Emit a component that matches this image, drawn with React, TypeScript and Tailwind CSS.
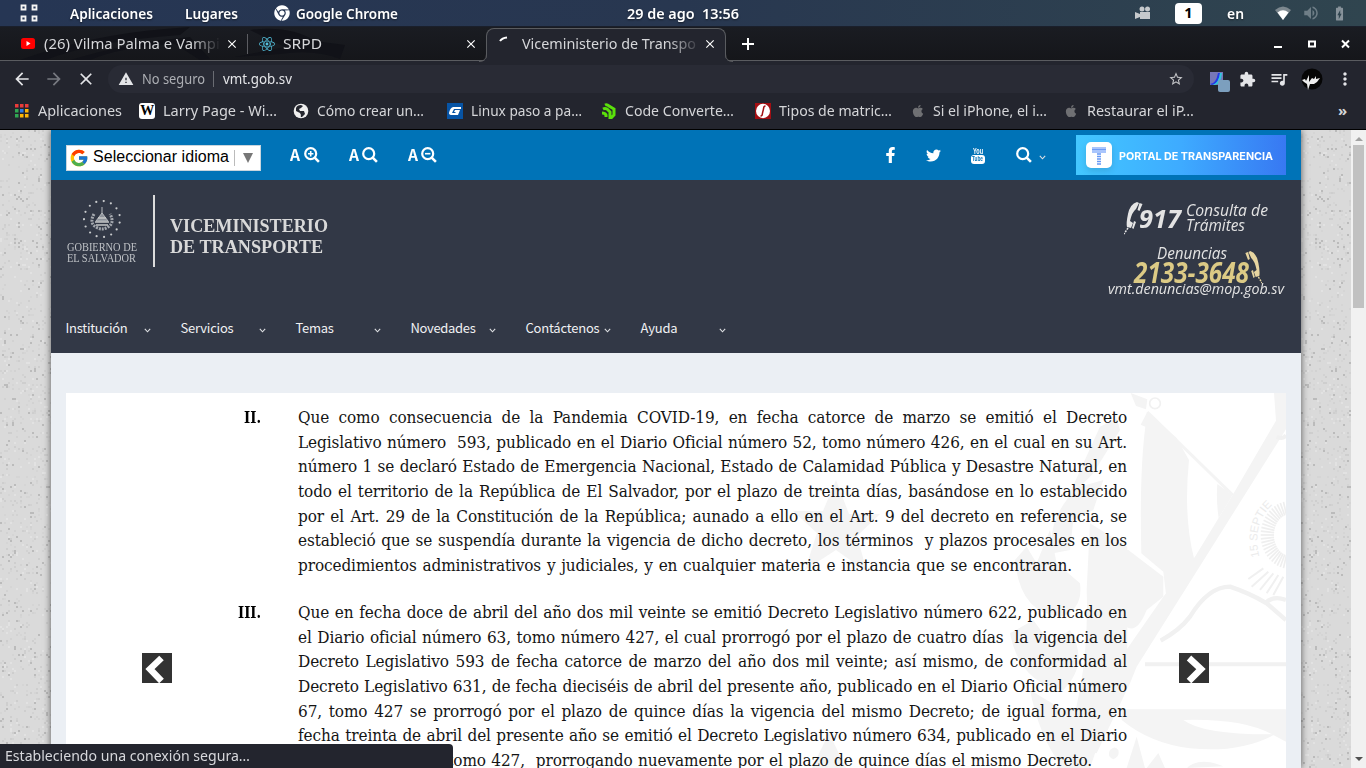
import React, { useLayoutEffect, useRef } from "react";
import { FaApple, FaChrome, FaFacebookF, FaReact, FaTwitter } from "react-icons/fa";
import { FcGoogle } from "react-icons/fc";
import { MdArrowBack, MdArrowForward, MdBatteryChargingFull, MdClose, MdExtension, MdMoreVert, MdQueueMusic, MdStarBorder, MdVolumeUp, MdWarning } from "react-icons/md";

// A single line of text fitted to a given width, by tracking or by narrowing its glyphs.
function T({ w, squeeze = false, className = "", children }: { w: number; squeeze?: boolean; className?: string; children: string }) {
  const ref = useRef<HTMLSpanElement>(null);
  useLayoutEffect(() => {
    const el = ref.current!;
    el.style.letterSpacing = "0px";
    el.style.transform = "none";
    const natural = el.getBoundingClientRect().width;
    if (squeeze) el.style.transform = `scaleX(${w / natural})`;
    else el.style.letterSpacing = `${(w - natural) / children.length}px`;
  }, [w, squeeze, children]);
  return (
    <span className={`block shrink-0 ${className}`} style={{ width: w }}>
      <span ref={ref} className="inline-block origin-left whitespace-pre">{children}</span>
    </span>
  );
}

function SystemBar() {
  return (
    <header className="flex h-[27px] shrink-0 items-center border-b border-[#1a1f2b] bg-gradient-to-r from-[#263654] via-[#283750] to-[#30454f] pl-5 text-[14.5px] font-semibold text-white [text-shadow:0_1px_2px_#0008]">
      <svg width="18" height="18" viewBox="0 0 18 18" fill="none" stroke="#f4f4f4" strokeWidth="1.8">
        <path d="M1.5 1.5h4v4h-4zM12.5 1.5h4v4h-4zM1.5 12.5h4v4h-4zM12.5 12.5h4v4h-4z" />
      </svg>
      <T w={83} squeeze className="ml-8 pt-px">Aplicaciones</T>
      <T w={53} squeeze className="ml-8 pt-px">Lugares</T>
      <FaChrome className="ml-9 size-4 shrink-0" />
      <T w={102} squeeze className="ml-1.5 pt-px">Google Chrome</T>
      <T w={112} squeeze className="ml-[229px] pt-px">29 de ago  13:56</T>
      <svg className="ml-[396px] shrink-0" width="16" height="14" viewBox="0 0 16 14" fill="#c6c9cc">
        <circle cx="7" cy="3" r="2.5" /><circle cx="12.5" cy="3" r="2.5" />
        <path d="M5 6h10v7H5V11L0 13V6l5 2z" />
      </svg>
      <div className="ml-6 flex h-[21px] w-[27px] shrink-0 items-center justify-center rounded-sm bg-white font-bold text-black [text-shadow:none]">1</div>
      <T w={17} squeeze className="ml-[25px] pt-px">en</T>
      <svg className="ml-[31px] shrink-0" width="16" height="14" viewBox="0 0 16 14">
        <path d="M8 14 0 4Q8-3 16 4z" fill="#7c878e" /><path d="M8 14 2.5 6.5Q8 2 13.5 6.5z" fill="#fff" />
      </svg>
      <MdVolumeUp className="ml-[11px] size-[18px] text-[#6f7e87]" />
      <MdBatteryChargingFull className="ml-[11px] size-[17px] text-[#87929a]" />
    </header>
  );
}

function TabStrip() {
  return (
    <div className="relative flex h-[34px] shrink-0 items-center border-b border-[#5a5c60] bg-gradient-to-b from-[#1a1c22] to-[#15161a] pl-[21px] text-[15px] text-[#d6d7da]">
      <svg className="absolute left-0 top-0" width="370" height="33" fill="#111218">
        <path d="M20 33Q90 8 165 2L190 0 180 8Q95 14 45 33zM70 33Q130 15 190 10L210 32 200 33 175 17Q120 20 90 33zM250 3Q290-2 315 14L345 18 340 32Q315 22 280 27L235 30 285 20z" />
      </svg>
      <svg className="relative shrink-0" width="14" height="11" viewBox="0 0 14 11"><rect width="14" height="11" rx="2.5" fill="#f00" /><path d="m5.5 3 4 2.5-4 2.5z" fill="#fff" /></svg>
      <div className="relative ml-[9px] w-[184px] [mask-image:linear-gradient(to_right,black_80%,transparent_96%)]"><T w={182} squeeze>(26) Vilma Palma e Vampir</T></div>
      <MdClose className="relative -ml-[3px] size-[14px] text-white" />
      <i className="relative ml-2 h-5 w-px bg-[#5c5d62]" />
      <FaReact className="relative ml-[11px] size-4 text-[#53c1de]" />
      <T w={39} squeeze className="relative ml-2">SRPD</T>
      <MdClose className="ml-[142px] size-[14px] shrink-0 text-white" />
      <div className="relative ml-2 flex h-[34px] w-[240px] shrink-0 translate-y-px items-center rounded-t-lg border-x border-t border-[#5a5c60] bg-[#23252e] pb-[3px] pl-3">
        <svg className="absolute -left-[8px] bottom-0" width="8" height="8"><path d="M0 8Q8 8 8 0V8z" fill="#23252e" /><path d="M0 7.5Q7.5 7.5 7.5 0" fill="none" stroke="#5a5c60" /></svg>
        <svg className="absolute -right-[8px] bottom-0" width="8" height="8"><path d="M8 8Q0 8 0 0V8z" fill="#23252e" /><path d="M8 7.5Q.5 7.5 .5 0" fill="none" stroke="#5a5c60" /></svg>
        <svg width="16" height="16" fill="none" stroke="#fff" strokeWidth="2"><path d="M1 5Q3 2 8 1.5" /></svg>
        <T w={174} squeeze className="ml-[7px] [mask-image:linear-gradient(to_right,black_84%,transparent_103%)]">Viceministerio de Transpo</T>
        <MdClose className="ml-[7px] size-[14px] shrink-0 text-white" />
      </div>
      <svg className="ml-4" width="12" height="12" stroke="#fff" strokeWidth="2"><path d="M6 0v12M0 6h12" /></svg>
      <svg className="ml-[519px]" width="80" height="12" fill="none" stroke="#fff"><path d="M1 9h8" strokeWidth="2" /><path d="M36 3.5h6v5h-6z" strokeWidth="2" /><path d="m69 2.5 7 7m0-7-7 7" strokeWidth="2" /></svg>
    </div>
  );
}

function Toolbar() {
  return (
    <div className="flex h-9 shrink-0 items-center bg-[#23252e] pl-3 text-[13.5px] text-[#e4e5e8]">
      <MdArrowBack className="size-5" />
      <MdArrowForward className="ml-3 size-5 text-[#777980]" />
      <MdClose className="ml-3 size-5" />
      <div className="ml-[12px] flex h-7 w-[1086px] items-center rounded-full bg-[#292b35] pl-[10px]">
        <MdWarning className="size-4 shrink-0" />
        <T w={63} squeeze className="ml-[8px] text-[#adafb4]">No seguro</T>
        <i className="ml-[8px] h-4 w-px bg-[#6a6c73]" />
        <T w={69} squeeze className="ml-[9px]">vmt.gob.sv</T>
        <MdStarBorder className="ml-[876px] size-4 shrink-0 text-[#c4c5c8]" />
      </div>
      <svg className="ml-[15px] mt-1 shrink-0" width="21" height="22" viewBox="0 0 21 22">
        <path d="M1 2h13v13H1z" fill="#7777b8" /><path d="M1 14Q7 14 9 3h2Q10 14 3 15z" fill="#243be8" /><path d="M4 15Q10 12 11 3h2Q12 14 6 15z" fill="#30c7dc" /><rect x="9" y="10" width="12" height="12" rx="2" fill="#7c9fbe" />
      </svg>
      <MdExtension className="ml-[9px] size-[17px] shrink-0" />
      <MdQueueMusic className="ml-[13px] size-5 shrink-0" />
      <svg className="ml-[12px] shrink-0" width="22" height="22" viewBox="0 0 22 22"><circle cx="11" cy="11" r="10.5" fill="#060606" /><path d="m1 12 3-1 1 2 3-6v7l3-4 2 1 2-3v3l4-1-3 4-3 2h-4l-2 6-1-6-3-2z" fill="#eee" /></svg>
      <MdMoreVert className="ml-3 size-5 shrink-0" />
    </div>
  );
}

function Bookmarks() {
  return (
    <nav className="flex h-8 shrink-0 items-center overflow-hidden bg-[#23252e] pb-[5px] pl-[15px] text-[15px] text-[#d5d6d9]">
      <svg width="14" height="14" className="mt-px shrink-0"><path d="M0 0h3.5v3.5H0zM5 0h3.5v3.5H5zM10 0h3.5v3.5H10z" fill="#ea3c3a" /><path d="M0 5h3.5v3.5H0zM0 10h3.5v3.5H0z" fill="#30a853" /><path d="M5 5h3.5v3.5H5z" fill="#2b7de9" /><path d="M10 5h3.5v3.5H10zM5 10h3.5v3.5H5zM10 10h3.5v3.5H10z" fill="#fbb606" /></svg>
      <T w={84} squeeze className="-mt-px ml-[9px]">Aplicaciones</T>
      <span className="ml-[17px] flex size-4 shrink-0 items-center justify-center rounded-[3px] bg-white font-['Liberation_Serif',serif] text-[14px] font-bold tracking-tighter text-black">W</span>
      <T w={114} squeeze className="-mt-px ml-2">Larry Page - Wi…</T>
      <svg className="ml-4 shrink-0" width="16" height="16" viewBox="0 0 16 16"><circle cx="8" cy="8" r="7.3" fill="#efefef" /><path d="M3 5q1-3 5-3l2 1-2 2-2 1 1 2h4l1 3-3 3q-2 0-1-2l-1-2-4-2z" fill="#25272f" /></svg>
      <T w={107} squeeze className="-mt-px ml-2">Cómo crear un…</T>
      <svg className="ml-[23px] shrink-0" width="16" height="16"><path d="M0 0h16v16H0z" fill="#0754a5" /><path d="M14 4H6Q3 5 2 10q0 2 3 2h6l2-5H8L7 9h2l-1 1H5l2-4h7z" fill="#fff" /></svg>
      <T w={111} squeeze className="-mt-px ml-2">Linux paso a pa…</T>
      <svg className="ml-[19px] shrink-0" width="16" height="16" fill="none" stroke="#5be10b" strokeWidth="3"><path d="M4 2q2-1 4 1l5 3v6l-3 3M2 6q2-1 4 0l3 3v7M1 10q3 0 4 2v2" /></svg>
      <T w={109} squeeze className="-mt-px ml-2">Code Converte…</T>
      <svg className="ml-[21px] shrink-0" width="16" height="16"><path d="M0 0h16v16H0z" fill="#a20f13" /><ellipse cx="8" cy="8" rx="7" ry="7.2" fill="#fff" /><path d="M10.5 3Q8.5 3 8.5 6L7.5 10q0 3-2 3" fill="none" stroke="#a20f13" strokeWidth="1.5" /></svg>
      <T w={113} squeeze className="-mt-px ml-2">Tipos de matric…</T>
      <FaApple className="ml-[19px] size-[14px] shrink-0 text-[#6f7073]" />
      <T w={114} squeeze className="-mt-px ml-2">Si el iPhone, el i…</T>
      <FaApple className="ml-[17px] size-[14px] shrink-0 text-[#6f7073]" />
      <T w={107} squeeze className="-mt-px ml-[9px]">Restaurar el iP…</T>
      <span className="-mt-px ml-[144px] font-bold">»</span>
    </nav>
  );
}

function Magnifier({ sign = "" }: { sign?: string }) {
  return (
    <svg className="shrink-0" width="16" height="16" viewBox="0 0 16 16" fill="none" stroke="#fff" strokeWidth="2.2">
      <circle cx="6.7" cy="6.7" r="5.5" /><path d="m10.7 10.7 4.2 4.2" strokeWidth="2.6" />
      {sign && <path d={sign} strokeWidth="1.6" />}
    </svg>
  );
}

const Chevron = ({ className = "" }: { className?: string }) => (
  <svg className={`shrink-0 ${className}`} width="7" height="5" fill="none" stroke="#dfe1e4" strokeWidth="1.1"><path d="m.8.8 2.7 3 2.7-3" /></svg>
);

function BlueBar() {
  return (
    <div className="flex h-[50px] shrink-0 items-center bg-[#0073b7] pl-[15px] text-white">
      <div className="mt-1.5 flex h-[26px] w-[195px] shrink-0 items-center border border-[#c8d5de] bg-white pl-[2px] font-['Liberation_Sans',sans-serif] text-[16px] text-black">
        <FcGoogle className="size-5" />
        <T w={136} className="ml-[4px] -mt-0.5">Seleccionar idioma</T>
        <i className="ml-[5px] h-4 w-px bg-[#bbb]" />
        <svg className="ml-2" width="10" height="10"><path d="M0 0h10L5 10z" fill="#777" /></svg>
      </div>
      <div className="ml-[29px] flex w-[230px] items-center font-['Noto_Sans_CJK_SC',sans-serif] text-[16px] font-bold leading-5">
        <T w={10} squeeze className="-mt-0.5">A</T><span className="ml-[4px]"><Magnifier sign="M4 6.7h5.4M6.7 4v5.4" /></span>
        <T w={10} squeeze className="-mt-0.5 ml-[29px]">A</T><span className="ml-[3px]"><Magnifier /></span>
        <T w={10} squeeze className="-mt-0.5 ml-[30px]">A</T><span className="ml-[3px]"><Magnifier sign="M4 6.7h5.4" /></span>
      </div>
      <FaFacebookF className="ml-[365px] h-4 w-[11px] shrink-0" />
      <FaTwitter className="ml-[30px] size-[15px] shrink-0" />
      <div className="ml-[29px] flex w-[15px] flex-col items-center font-['Liberation_Sans',sans-serif] text-[9px] font-bold leading-[8px]">
        <T w={10} squeeze>You</T>
        <span className="flex h-[9px] w-[14px] items-center justify-center rounded-[3px] bg-white text-[8px] text-[#0073b7]"><T w={11} squeeze>Tube</T></span>
      </div>
      <span className="ml-[31px]"><Magnifier /></span>
      <Chevron className="ml-[7px] mt-1" />
      <div className="ml-[30px] flex h-10 w-[210px] shrink-0 items-center bg-gradient-to-r from-[#43c7ff] via-[#3eabff] to-[#3878f2] pl-[10px]">
        <svg className="shrink-0 drop-shadow-md" width="26" height="26"><rect width="26" height="26" rx="5" fill="#fff" /><path d="M6 5h14v6H6z" fill="#a9c5fc" /><path d="M6 7.5h14" stroke="#6c9bf6" /><path d="M11 12h4M11 14.5h4M11 17h4M11 19.5h4M11 22h4" stroke="#6698f5" strokeWidth="1.5" /></svg>
        <T w={154} squeeze className="ml-[7px] pt-0.5 font-['Inter',sans-serif] text-[11px] font-bold">PORTAL DE TRANSPARENCIA</T>
      </div>
    </div>
  );
}

const ringDots = Array.from({ length: 15 }, (_, i) => i * ((2 * Math.PI) / 15) + 0.2);

function Phone({ fill }: { fill: string }) {
  return (
    <svg className="shrink-0" width="20" height="34" viewBox="0 0 20 34" fill={fill}>
      <path d="M13 1Q6 3 4 13q-2 9-1 13l4 1 2-5-3-2Q8 11 12 8l3-6z" /><path d="m15.500 2 3 1-3 7-2-1zM10 20l2 1-2.500 7-1.500-1z" /><path d="m4 27-4 6" stroke={fill} strokeWidth="1.5" strokeDasharray="2 1" />
    </svg>
  );
}

function Brand() {
  return (
    <div className="flex h-[134px] px-4 pt-[15px] text-[#d9d9d9]">
      <div className="w-[86px] font-['Liberation_Serif',serif] text-[12px] leading-[10.5px] text-[#bfc2c6]">
        <svg className="ml-4 mt-[5px]" width="40" height="40" viewBox="0 0 40 40" fill="#c9cbcd">
          {ringDots.map((a) => <circle key={a} cx={19 + 18 * Math.cos(a)} cy={19 + 18 * Math.sin(a)} r="1.1" />)}
          <path d="M19 7v7M13 21l6-8 6 8z" stroke="#b5b8bc" strokeWidth="1" fill="#8c9199" />
          <path d="M11 14q-5 9 2 13 6 4 12 0 7-4 2-13" fill="none" stroke="#a4a8ae" strokeWidth="3" strokeDasharray="2 1" />
          <path d="M12 22h14M13 25h12M15 18h8" stroke="#c5c6c8" strokeWidth="1.3" />
        </svg>
        <T w={70} squeeze className="mt-[2px]">GOBIERNO DE</T>
        <T w={69} squeeze>EL SALVADOR</T>
      </div>
      <i className="h-[72px] w-0.5 bg-[#dcdcdc]" />
      <div className="ml-[15px] pt-[21px] font-['Liberation_Serif',serif] text-[18.5px] font-bold leading-[21px]">
        <T w={158} squeeze>VICEMINISTERIO</T>
        <T w={153} squeeze>DE TRANSPORTE</T>
      </div>
      <div className="ml-auto mr-0 flex w-[177px] flex-col pt-[6px] font-['Open_Sans','Noto_Sans',sans-serif] italic text-[#e3e3e3]">
        <div className="flex h-[37px] pl-4">
          <Phone fill="#e5e5e5" />
          <T w={42} squeeze className="-ml-[5px] mt-[4px] text-[25px] font-bold leading-[26px]">917</T>
          <div className="ml-[5px] pt-[2px] text-[16px] leading-[15px]"><T w={82} squeeze>Consulta de</T><T w={59} squeeze>Trámites</T></div>
        </div>
        <T w={70} squeeze className="ml-[49px] mt-[8px] text-[16px] leading-[15px]">Denuncias</T>
        <div className="flex h-[20px] pl-[26px] text-[#dcca85]">
          <T w={115} squeeze className="text-[28px] font-bold leading-[23px]">2133-3648</T>
          <span className="-ml-[6px] -mt-[11px] -scale-x-90"><Phone fill="#e7d5a0" /></span>
        </div>
        <T w={176} squeeze className="-mt-px text-[15px] leading-[16px]">vmt.denuncias@mop.gob.sv</T>
      </div>
    </div>
  );
}

const menu: [string, number][] = [["Institución", 62], ["Servicios", 53], ["Temas", 38], ["Novedades", 65], ["Contáctenos", 74], ["Ayuda", 37]];

function Menu() {
  return (
    <nav className="flex h-[39px] gap-[30px] pl-[14.5px] font-['Noto_Sans_CJK_SC',sans-serif] text-[13px] leading-[28px] text-[#f0f1f3]">
      {menu.map(([label, w]) => (
        <div key={label} className="flex h-[28px] w-[85px] items-center justify-between">
          <T w={w}>{label}</T>
          <Chevron className="mt-1" />
        </div>
      ))}
    </nav>
  );
}

const first = [
  "Que como consecuencia de la Pandemia COVID-19, en fecha catorce de marzo se emitió el Decreto",
  "Legislativo número  593, publicado en el Diario Oficial número 52, tomo número 426, en el cual en su Art.",
  "número 1 se declaró Estado de Emergencia Nacional, Estado de Calamidad Pública y Desastre Natural, en",
  "todo el territorio de la República de El Salvador, por el plazo de treinta días, basándose en lo establecido",
  "por el Art. 29 de la Constitución de la República; aunado a ello en el Art. 9 del decreto en referencia, se",
  "estableció que se suspendía durante la vigencia de dicho decreto, los términos  y plazos procesales en los",
  "procedimientos administrativos y judiciales, y en cualquier materia e instancia que se encontraran.",
];
const second = [
  "Que en fecha doce de abril del año dos mil veinte se emitió Decreto Legislativo número 622, publicado en",
  "el Diario oficial número 63, tomo número 427, el cual prorrogó por el plazo de cuatro días  la vigencia del",
  "Decreto Legislativo 593 de fecha catorce de marzo del año dos mil veinte; así mismo, de conformidad al",
  "Decreto Legislativo 631, de fecha dieciséis de abril del presente año, publicado en el Diario Oficial número",
  "67, tomo 427 se prorrogó por el plazo de quince días la vigencia del mismo Decreto; de igual forma, en",
  "fecha treinta de abril del presente año se emitió el Decreto Legislativo número 634, publicado en el Diario",
  "Oficial número 75, tomo 427,  prorrogando nuevamente por el plazo de quince días el mismo Decreto.",
];

// Justified serif line: remaining slack goes between words.
function Line({ text, w }: { text: string; w: number }) {
  const ref = useRef<HTMLSpanElement>(null);
  useLayoutEffect(() => {
    const el = ref.current!;
    el.style.wordSpacing = "0px";
    const gaps = text.split(" ").length - 1;
    el.style.wordSpacing = `${(w - el.getBoundingClientRect().width) / gaps}px`;
  }, [text, w]);
  return (
    <div className="h-[24.7px] whitespace-pre" style={{ width: w }}>
      <span ref={ref} className="inline-block">{text}</span>
    </div>
  );
}

function Paragraph({ mark, lines, last }: { mark: string; lines: string[]; last: number }) {
  return (
    <section className="relative flex font-['DejaVu_Serif_Condensed','DejaVu_Serif',serif] text-[17px] leading-[24.7px] tracking-[-0.1px] text-[#151515]">
      <div className="flex w-[195px] shrink-0 justify-end font-bold text-black"><T w={mark.length * 6 - 1} squeeze>{mark}</T></div>
      <div className="ml-[37px]">
        {lines.map((l, i) => <Line key={i} text={l} w={i === lines.length - 1 ? last : 829} />)}
      </div>
    </section>
  );
}

const rays = Array.from({ length: 56 }, (_, i) => (i * Math.PI) / 28);

function Watermark() {
  return (
    <svg className="absolute right-0 top-0" width="506" height="375" viewBox="780 393 506 375" fill="#f4f4f4">
      <path d="m836 480 13 34h31l-23 22 10 36-31-22-31 20 12-37-24-22h30zM829 733l17 35h-34z" />
      <g transform="translate(990 390) scale(.33333)">
        <path d="M422 9 472 28 468 58 438 48zM472 66 452 104 466 110Q448 250 454 490L520 545 530 630 582 604 620 530 612 505Q580 380 597 210L560 145z" />
        <path d="M472 66 728 315" stroke="#f4f4f4" strokeWidth="9" />
        <path d="M682 282 728 315 686 384Q678 330 682 282z" />
        <path d="M852 9H888V118L440 830 420 880 320 1090 290 1080 300 960 395 800 520 620 615 500 728 315 858 92z" />
        <path d="M415 485 520 545M385 480 385 680Q430 760 470 660L520 620V560L415 480z" />
        <path d="M300 400 412 470V780L360 960 300 1134H200Q300 900 290 600zM330 110l50-25 10 35-80 130-40 40 70-20-30 90-60 30-10 90-50 10Q170 410 230 330z" />
        <path d="M75 510 110 470 140 520 180 420 200 520 270 580Q280 660 210 680 90 670 75 510zM60 730 130 690 180 760 240 720Q300 820 220 900 90 880 60 730zM120 900 220 960 320 960 290 1134H220Q150 1050 120 900z" />
        <path d="M512 752Q570 720 600 680 655 590 720 590 780 610 830 640L888 690M825 640Q850 615 888 630" fill="none" stroke="#f1f1f1" strokeWidth="13" />
        <path d="M465 823H888M860 140Q880 150 888 135" fill="none" stroke="#f1f1f1" strokeWidth="12" />
        <path d="M395 958H888V1055L850 1035Q760 985 580 990 640 1035 855 1033 750 1090 600 1075 480 1060 395 990zM360 1080q15-15 25 0 5 20-15 28-20-8-10-28zM410 1134 440 1040 465 1134zM470 1134l35-45 20 45zM590 1134q40-35 110-5z" />
        <circle cx="495" cy="40" r="16" fill="none" stroke="#f1f1f1" strokeWidth="5" />
        <g stroke="#efefef" strokeWidth="5">{rays.map((a) => <path key={a} d={`M${900 + 48 * Math.cos(a)} ${435 + 62 * Math.sin(a)}L${900 + 88 * Math.cos(a)} ${435 + 102 * Math.sin(a)}`} />)}</g>
        <path d="M820 535 775 567M835 545 785 590M850 550 810 600M865 555 830 610M880 560 850 615" stroke="#f0f0f0" strokeWidth="6" />
        <path id="arc" d="M808 500Q775 350 925 305" fill="none" />
        <text className="font-['Liberation_Sans',sans-serif] text-[34px]" fill="#ebebeb"><textPath href="#arc">15 SEPTIE</textPath></text>
      </g>
    </svg>
  );
}

function Slide() {
  const box = "absolute top-[260px] flex size-[30px] items-center justify-center bg-[#323232]";
  return (
    <main className="relative mx-[15px] mt-10 h-[375px] shrink-0 overflow-hidden bg-white pt-[12px]">
      <Watermark />
      <Paragraph mark="II." lines={first} last={774} />
      <div className="h-[22px]" />
      <Paragraph mark="III." lines={second} last={794} />
      <button className={`${box} left-[76px]`}><svg width="30" height="30" fill="none" stroke="#fff" strokeWidth="6.5"><path d="M19.500 5 8 16l11.500 12" /></svg></button>
      <button className={`${box} right-[77px]`}><svg width="30" height="30" fill="none" stroke="#fff" strokeWidth="6.5"><path d="m10 5 12 11-12 12" /></svg></button>
    </main>
  );
}

const specks = Array.from({ length: 1150 }, (_, i) => {
  const r = (k: number) => { const v = Math.sin(i * 12.9898 + k * 78.233) * 43758.5453; return v - Math.floor(v); };
  return { x: Math.floor(r(1) * 26) * 2, y: Math.floor(r(2) * 320) * 2, c: ["#d2d2d2", "#e2e2e2", "#cecece", "#bbbbbb", "#d5d5d5"][Math.floor(r(3) * 5)] };
});

function Gravel({ className }: { className: string }) {
  return (
    <svg className={`shrink-0 bg-[#dadada] ${className}`} height="638">
      {specks.map((s, i) => <rect key={i} x={s.x} y={s.y} width="2" height="2" fill={s.c} />)}
    </svg>
  );
}

export default function App() {
  return (
    <div className="relative flex h-[768px] w-[1366px] flex-col overflow-hidden bg-black font-['Noto_Sans',sans-serif]">
      <SystemBar />
      <TabStrip />
      <Toolbar />
      <Bookmarks />
      <div className="mt-px flex h-[638px] shrink-0 overflow-hidden">
        <Gravel className="w-[51px]" />
        <div className="relative flex w-[1250px] shrink-0 flex-col bg-[#ebeff4] shadow-[0_0_7px_#0009]">
          <BlueBar />
          <div className="h-[173px] shrink-0 bg-[#323846]"><Brand /><Menu /></div>
          <Slide />
        </div>
        <Gravel className="w-[50px]" />
        <div className="relative flex w-[15px] flex-col items-center justify-between bg-[#f1f1f1] py-[7px]">
          <svg width="8" height="4"><path d="m0 4 4-4 4 4z" fill="#a2a2a2" /></svg>
          <i className="absolute left-[2px] top-[15px] h-[163px] w-[11px] bg-[#c1c1c1]" />
          <svg width="8" height="4"><path d="m0 0 4 4 4-4z" fill="#505050" /></svg>
        </div>
      </div>
      <div className="absolute bottom-0 left-0 flex h-6 w-[453px] items-center rounded-tr bg-[#23252e] pb-0.5 pl-[5px] text-[15px] text-[#d7d8dc]">
        <T w={245} squeeze>Estableciendo una conexión segura…</T>
      </div>
    </div>
  );
}
